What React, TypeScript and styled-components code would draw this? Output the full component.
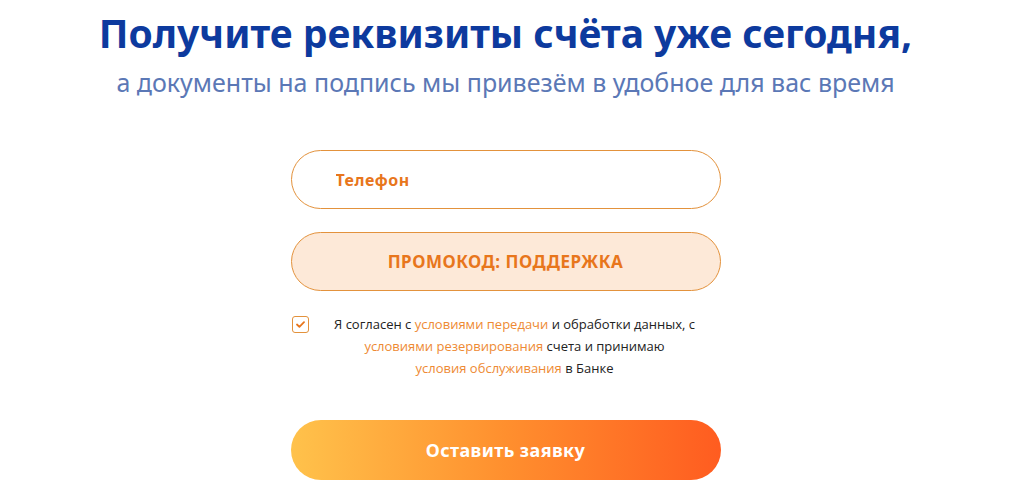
import React, { useState } from 'react';
import styled, { createGlobalStyle } from 'styled-components';

const GlobalStyle = createGlobalStyle`
  html, body {
    margin: 0;
    padding: 0;
    background: #ffffff;
  }
`;

const Page = styled.div`
  display: flex;
  flex-direction: column;
  align-items: center;
  padding: 8px 10px 0 0;
  box-sizing: border-box;
  width: 100%;
`;

const Title = styled.h1`
  margin: 0;
  font-family: 'Noto Sans', sans-serif;
  font-weight: 700;
  font-size: 39px;
  line-height: 50px;
  color: #0d3a9e;
  text-align: center;
`;

const Subtitle = styled.p`
  margin: 8px 0 0;
  font-family: 'Noto Sans', sans-serif;
  font-weight: 400;
  font-size: 25px;
  line-height: 32px;
  color: #5b78b6;
  text-align: center;
`;

const Form = styled.form`
  width: 430px;
  margin-top: 52px;
  display: flex;
  flex-direction: column;
`;

const Field = styled.input<{ $filled?: boolean }>`
  box-sizing: border-box;
  width: 100%;
  height: 59px;
  border-radius: 30px;
  border: 1px solid #e3923c;
  background: ${({ $filled }) => ($filled ? '#fde9d8' : '#ffffff')};
  padding: 0 44px;
  font-family: 'Noto Sans', sans-serif;
  font-weight: 700;
  font-size: ${({ $filled }) => ($filled ? '17px' : '16px')};
  letter-spacing: ${({ $filled }) => ($filled ? '0.5px' : '0.5px')};
  color: #e8761c;
  text-align: ${({ $filled }) => ($filled ? 'center' : 'left')};
  outline: none;

  & + & {
    margin-top: 23px;
  }

  &::placeholder {
    color: #e8761c;
    opacity: 1;
  }
`;

const Agreement = styled.label`
  display: flex;
  align-items: flex-start;
  gap: 10px;
  margin-top: 22px;
  cursor: pointer;
`;

const CheckBox = styled.span<{ $checked: boolean }>`
  flex: none;
  width: 15px;
  height: 15px;
  margin: 3px 0 0 1px;
  border: 1px solid #e3923c;
  border-radius: 3px;
  display: flex;
  align-items: center;
  justify-content: center;
  color: #e8761c;
`;

const AgreementText = styled.span`
  flex: 1;
  font-family: 'Open Sans', sans-serif;
  font-size: 13px;
  line-height: 22px;
  color: #222222;
  text-align: center;
  padding-right: 10px;
`;

const Link = styled.a`
  color: #ee8a33;
  text-decoration: none;
`;

const Submit = styled.button`
  margin-top: 41px;
  height: 60px;
  width: 100%;
  border: none;
  border-radius: 30px;
  background: linear-gradient(90deg, #ffc24b 0%, #ff8f2e 50%, #ff5c20 100%);
  font-family: 'Noto Sans', sans-serif;
  font-weight: 700;
  font-size: 18px;
  letter-spacing: 0.4px;
  color: #ffffff;
  cursor: pointer;
`;

const App = () => {
  const [agreed, setAgreed] = useState(true);

  return (
    <>
      <GlobalStyle />
      <Page>
        <Title>Получите реквизиты счёта уже сегодня,</Title>
        <Subtitle>а документы на подпись мы привезём в удобное для вас время</Subtitle>
        <Form onSubmit={(e) => e.preventDefault()}>
          <Field placeholder="Телефон" />
          <Field $filled readOnly value="ПРОМОКОД: ПОДДЕРЖКА" />
          <Agreement onClick={() => setAgreed(!agreed)}>
            <CheckBox $checked={agreed}>
              {agreed && (
                <svg width="9" height="7" viewBox="0 0 9 7">
                  <path
                    d="M1 3.5 L3.4 5.8 L8 1.2"
                    fill="none"
                    stroke="currentColor"
                    strokeWidth="1.8"
                    strokeLinecap="round"
                    strokeLinejoin="round"
                  />
                </svg>
              )}
            </CheckBox>
            <AgreementText>
              Я согласен с <Link href="#">условиями передачи</Link> и обработки данных, с
              <br />
              <Link href="#">условиями резервирования</Link> счета и принимаю
              <br />
              <Link href="#">условия обслуживания</Link> в Банке
            </AgreementText>
          </Agreement>
          <Submit type="submit">Оставить заявку</Submit>
        </Form>
      </Page>
    </>
  );
};

export default App;
